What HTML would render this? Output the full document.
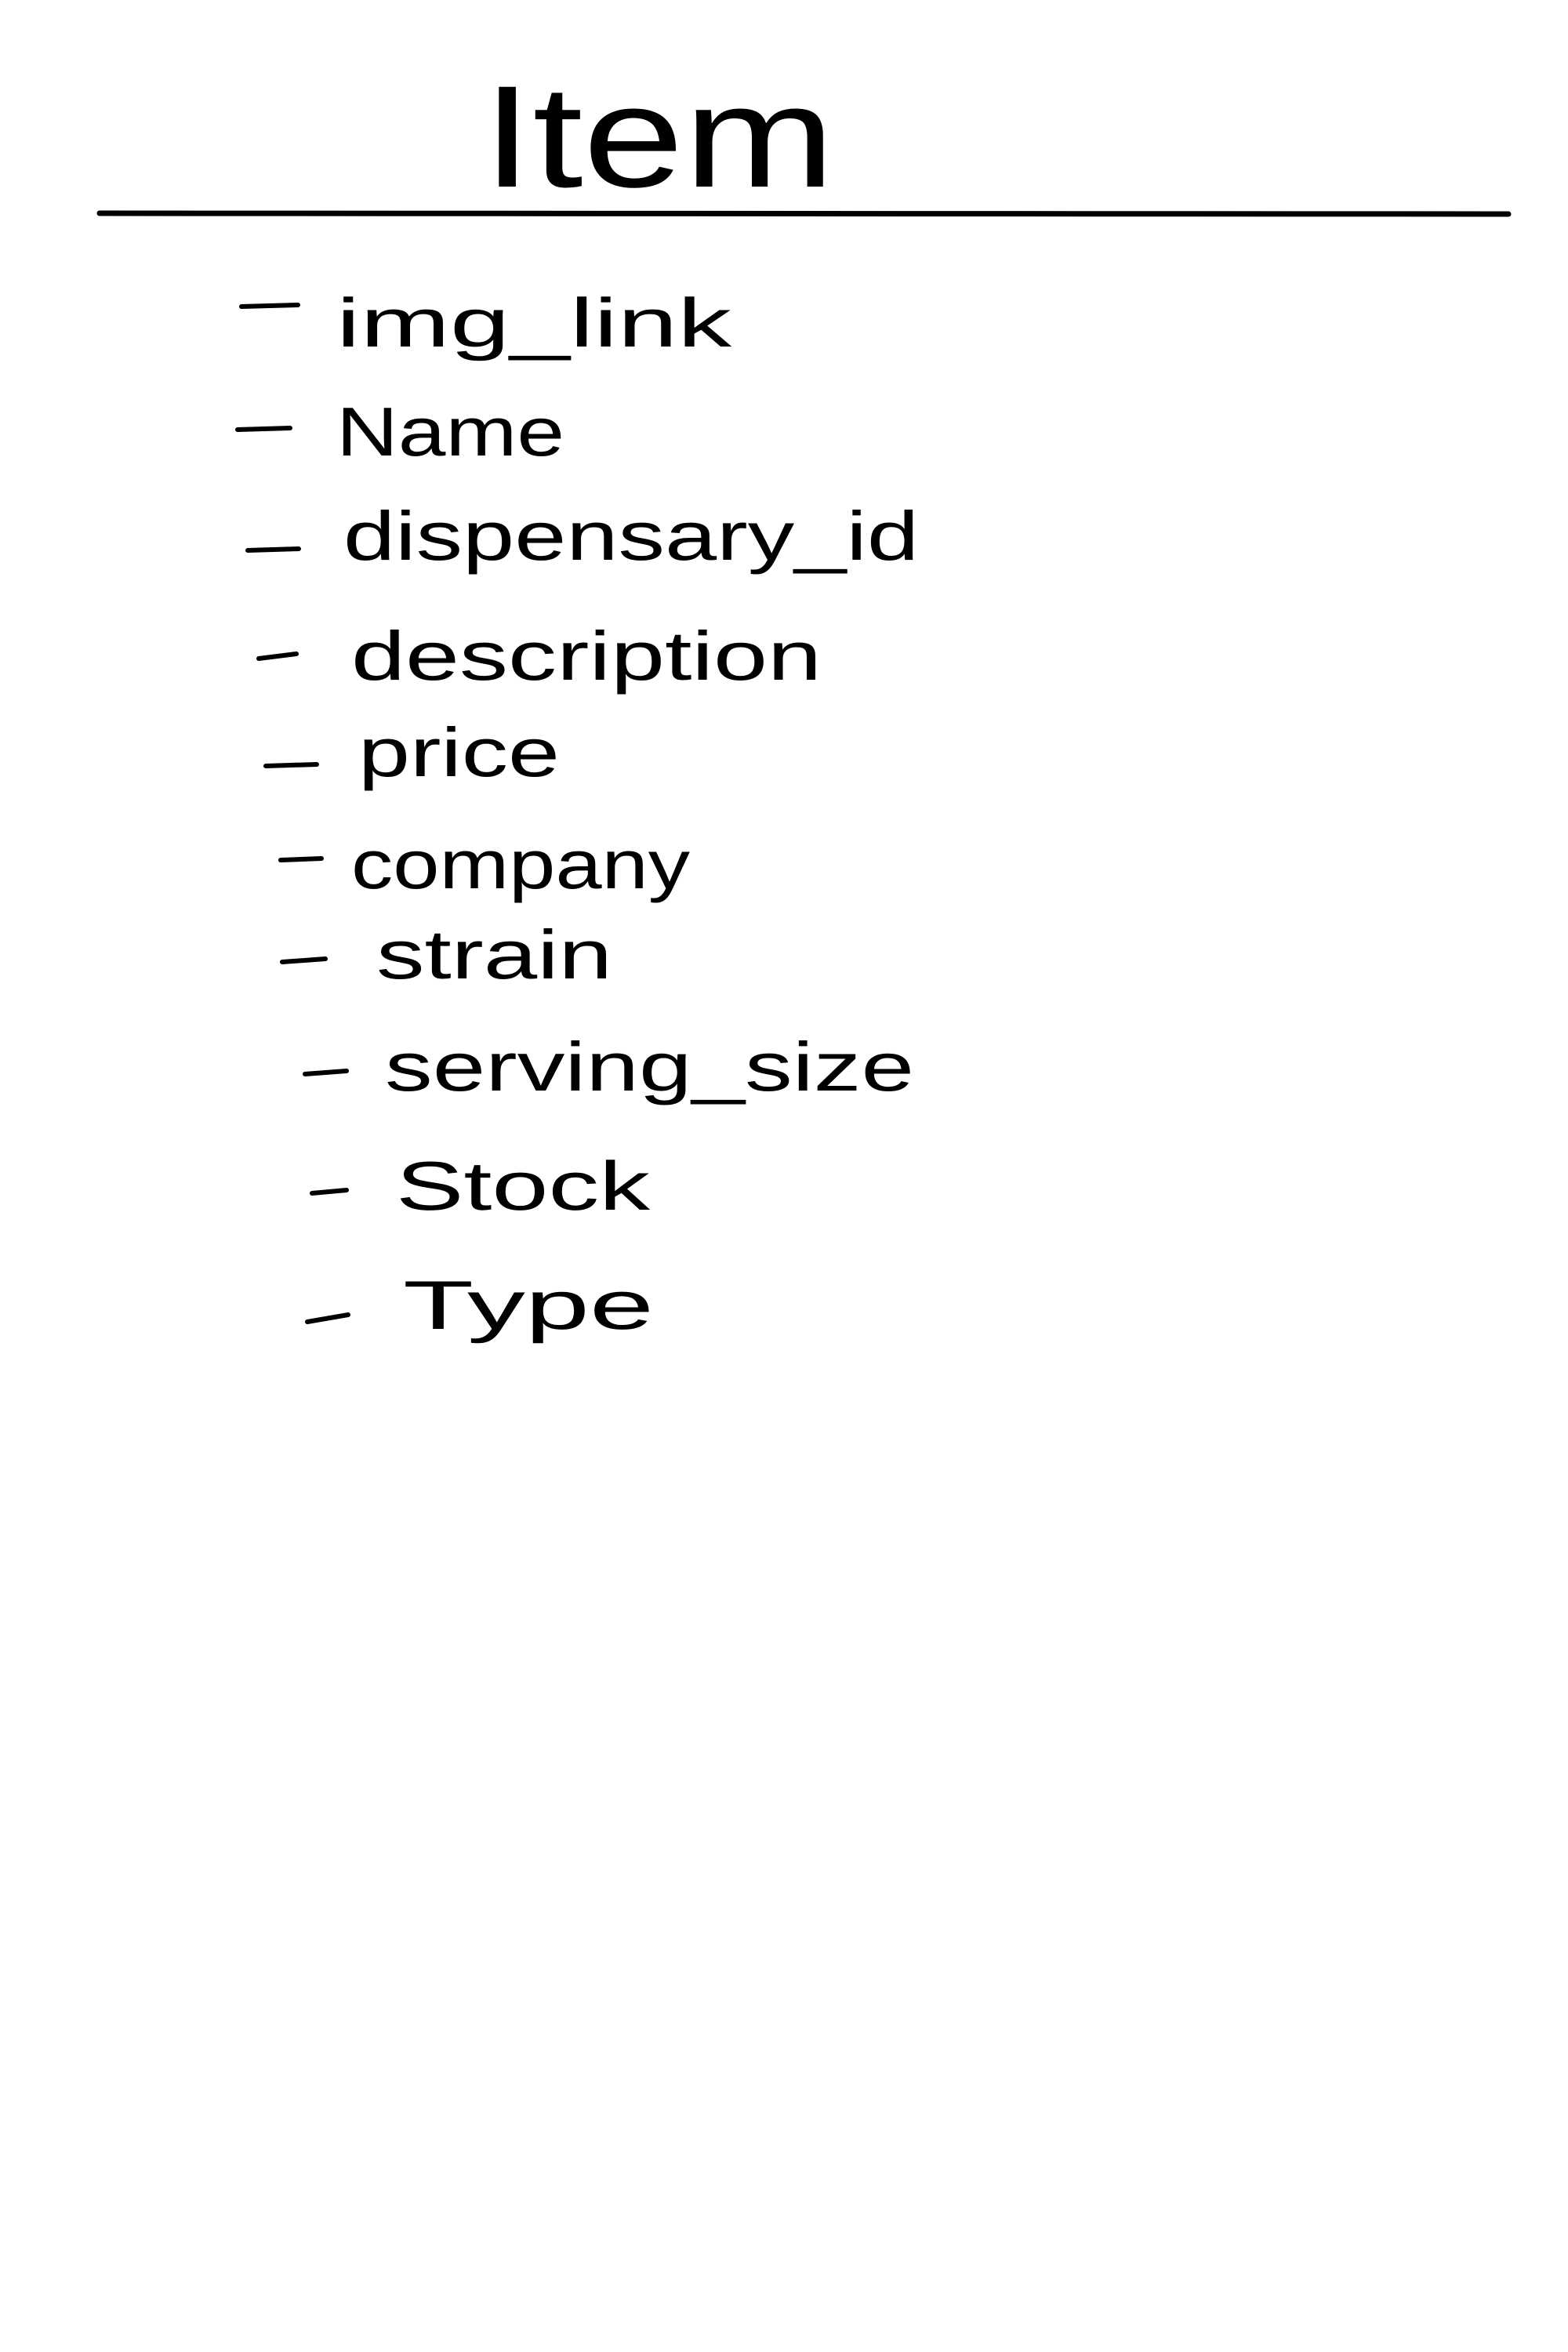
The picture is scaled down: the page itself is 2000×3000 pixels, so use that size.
<!DOCTYPE html>
<html><head><meta charset="utf-8"><style>
html,body{margin:0;padding:0;background:#fff;}
svg{display:block;}
text{font-family:"Liberation Sans",sans-serif;fill:#000;}
</style></head><body>
<svg width="2000" height="3000" viewBox="0 0 2000 3000" xmlns="http://www.w3.org/2000/svg">
<rect width="2000" height="3000" fill="#fff"/>
<text x="615" y="238" font-size="185" textLength="450" lengthAdjust="spacingAndGlyphs">Item</text>
<line x1="127" y1="272" x2="1924" y2="273" stroke="#000" stroke-width="7" stroke-linecap="round"/>
<g stroke="#000" stroke-width="6" stroke-linecap="round">
<line x1="308" y1="391" x2="380" y2="389"/>
<line x1="303" y1="548" x2="370" y2="546"/>
<line x1="316" y1="702" x2="381" y2="700"/>
<line x1="330" y1="840" x2="378" y2="834"/>
<line x1="339" y1="977" x2="404" y2="975"/>
<line x1="358" y1="1097" x2="410" y2="1095"/>
<line x1="360" y1="1227" x2="415" y2="1223"/>
<line x1="389" y1="1370" x2="442" y2="1366"/>
<line x1="398" y1="1522" x2="442" y2="1518"/>
<line x1="392" y1="1686" x2="444" y2="1677"/>
</g>
<g font-size="88">
<text x="429" y="442" textLength="504" lengthAdjust="spacingAndGlyphs">img_link</text>
<text x="429" y="581" textLength="291" lengthAdjust="spacingAndGlyphs">Name</text>
<text x="438" y="714" textLength="734" lengthAdjust="spacingAndGlyphs">dispensary_id</text>
<text x="448" y="867" textLength="600" lengthAdjust="spacingAndGlyphs">description</text>
<text x="457" y="990" textLength="257" lengthAdjust="spacingAndGlyphs">price</text>
<text x="448" y="1133" textLength="432" lengthAdjust="spacingAndGlyphs">company</text>
<text x="480" y="1248" textLength="301" lengthAdjust="spacingAndGlyphs">strain</text>
<text x="491" y="1391" textLength="675" lengthAdjust="spacingAndGlyphs">serving_size</text>
<text x="505" y="1543" textLength="324" lengthAdjust="spacingAndGlyphs">Stock</text>
<text x="514" y="1695" textLength="320" lengthAdjust="spacingAndGlyphs">Type</text>
</g>
</svg>
</body></html>
